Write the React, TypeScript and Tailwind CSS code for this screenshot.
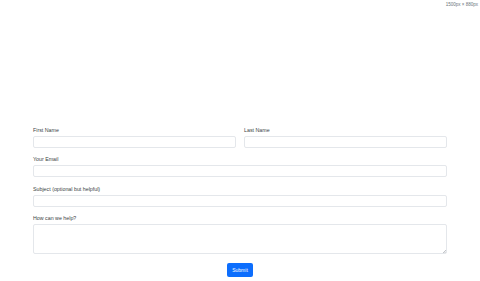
export default function App() {
  const field =
    "block h-[12px] w-full rounded-[2px] border border-[#e4e7eb] bg-white outline-none";
  const label = "mb-[2px] block text-[5.3px] leading-[7px] text-[#3a3f44]";

  return (
    <div className="relative h-[281px] w-[480px] overflow-hidden bg-white font-['Liberation_Sans',Arial,sans-serif]">
      <div className="absolute right-[2px] top-[2px] text-[4.5px] leading-[6px] text-[#6c757d]">
        1500px × 880px
      </div>
      <form className="flex flex-col gap-[8.4px] px-[33px] pt-[127px]">
        <div className="grid grid-cols-2 gap-x-[8px]">
          <div>
            <label className={label}>First Name</label>
            <input className={field} />
          </div>
          <div>
            <label className={label}>Last Name</label>
            <input className={field} />
          </div>
        </div>
        <div>
          <label className={label}>Your Email</label>
          <input className={field} />
        </div>
        <div>
          <label className={label}>Subject (optional but helpful)</label>
          <input className={field} />
        </div>
        <div>
          <label className={label}>How can we help?</label>
          <div className="relative">
            <textarea className="block h-[30px] w-full resize-none rounded-[2px] border border-[#e4e7eb] bg-white outline-none" />
            {/* tiny resize grip */}
            <svg
              className="absolute bottom-[1px] right-[1px]"
              width="3"
              height="3"
              viewBox="0 0 3 3"
            >
              <path d="M3 0L0 3M3 1.5L1.5 3" stroke="#9aa0a6" strokeWidth="0.6" />
            </svg>
          </div>
        </div>
        <div className="flex justify-center">
          <button
            type="button"
            className="h-[14px] w-[26px] rounded-[2px] bg-[#0d6efd] text-[5px] leading-[14px] text-white"
          >
            Submit
          </button>
        </div>
      </form>
    </div>
  );
}
